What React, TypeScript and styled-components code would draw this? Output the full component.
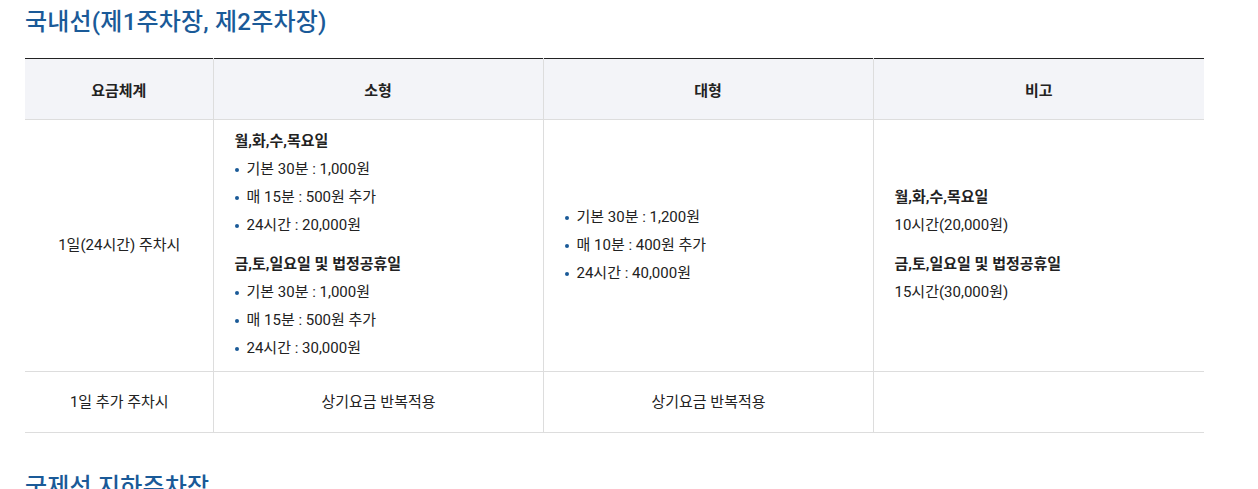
import * as React from 'react';
import styled, { createGlobalStyle } from 'styled-components';

const GlobalStyle = createGlobalStyle`
  html, body {
    margin: 0;
    padding: 0;
    background: #fff;
  }
  body {
    font-family: Roboto, "Noto Sans CJK KR", sans-serif;
    color: #222;
  }
`;

const Page = styled.div`
  padding: 6px 54px 0 25px;
`;

const Title = styled.h3`
  margin: 0;
  font-size: 24px;
  line-height: 32px;
  font-weight: 500;
  color: #1a5a98;
  letter-spacing: 0.2px;
`;

const Section = styled.section`
  & + & {
    margin-top: 38px;
  }
`;

const Table = styled.table`
  width: 100%;
  margin-top: 20px;
  border-collapse: collapse;
  border-top: 1px solid #222;
  table-layout: fixed;
  font-size: 15px;
  letter-spacing: 0;
`;

const Th = styled.th`
  height: 60px;
  padding: 0;
  background: #f3f4f8;
  font-weight: 700;
  font-size: 15px;
  border-bottom: 1px solid #ddd;
  border-left: 1px solid #ddd;
  &:first-child {
    border-left: 0;
  }
`;

const Td = styled.td<{ $left?: boolean }>`
  padding: 7px 20px 9px 21px;
  text-align: ${p => (p.$left ? 'left' : 'center')};
  vertical-align: middle;
  line-height: 28px;
  border-bottom: 1px solid #ddd;
  border-left: 1px solid #ddd;
  &:first-child {
    border-left: 0;
  }
`;

const ShortTd = styled(Td)`
  height: 60px;
  padding-top: 0;
  padding-bottom: 0;
`;

const Label = styled.p`
  margin: 0;
  font-weight: 700;
`;

const Group = styled.div`
  & + & {
    margin-top: 11px;
  }
`;

const Text = styled.p`
  margin: 0;
`;

const List = styled.ul`
  margin: 0;
  padding: 0;
  list-style: none;
`;

const Item = styled.li`
  position: relative;
  padding-left: 12px;
  &::before {
    content: '';
    position: absolute;
    left: 0;
    top: 13px;
    width: 4px;
    height: 4px;
    border-radius: 50%;
    background: #1a5a98;
  }
`;

const Cut = styled.div`
  height: 20px;
  overflow: hidden;
`;

const weekday = ['기본 30분 : 1,000원', '매 15분 : 500원 추가', '24시간 : 20,000원'];
const weekend = ['기본 30분 : 1,000원', '매 15분 : 500원 추가', '24시간 : 30,000원'];
const large = ['기본 30분 : 1,200원', '매 10분 : 400원 추가', '24시간 : 40,000원'];

export default function App() {
  return (
    <>
      <GlobalStyle />
      <Page>
        <Section>
          <Title>국내선(제1주차장, 제2주차장)</Title>
          <Table>
            <colgroup>
              <col style={{ width: 188 }} />
              <col style={{ width: 330 }} />
              <col style={{ width: 330 }} />
              <col />
            </colgroup>
            <thead>
              <tr>
                <Th>요금체계</Th>
                <Th>소형</Th>
                <Th>대형</Th>
                <Th>비고</Th>
              </tr>
            </thead>
            <tbody>
              <tr>
                <Td>1일(24시간) 주차시</Td>
                <Td $left>
                  <Group>
                    <Label>월,화,수,목요일</Label>
                    <List>
                      {weekday.map(t => <Item key={t}>{t}</Item>)}
                    </List>
                  </Group>
                  <Group>
                    <Label>금,토,일요일 및 법정공휴일</Label>
                    <List>
                      {weekend.map(t => <Item key={t}>{t}</Item>)}
                    </List>
                  </Group>
                </Td>
                <Td $left>
                  <List>
                    {large.map(t => <Item key={t}>{t}</Item>)}
                  </List>
                </Td>
                <Td $left>
                  <Group>
                    <Label>월,화,수,목요일</Label>
                    <Text>10시간(20,000원)</Text>
                  </Group>
                  <Group>
                    <Label>금,토,일요일 및 법정공휴일</Label>
                    <Text>15시간(30,000원)</Text>
                  </Group>
                </Td>
              </tr>
              <tr>
                <ShortTd>1일 추가 주차시</ShortTd>
                <ShortTd>상기요금 반복적용</ShortTd>
                <ShortTd>상기요금 반복적용</ShortTd>
                <ShortTd />
              </tr>
            </tbody>
          </Table>
        </Section>
        <Section>
          <Cut>
            <Title>국제선 지하주차장</Title>
          </Cut>
        </Section>
      </Page>
    </>
  );
}
